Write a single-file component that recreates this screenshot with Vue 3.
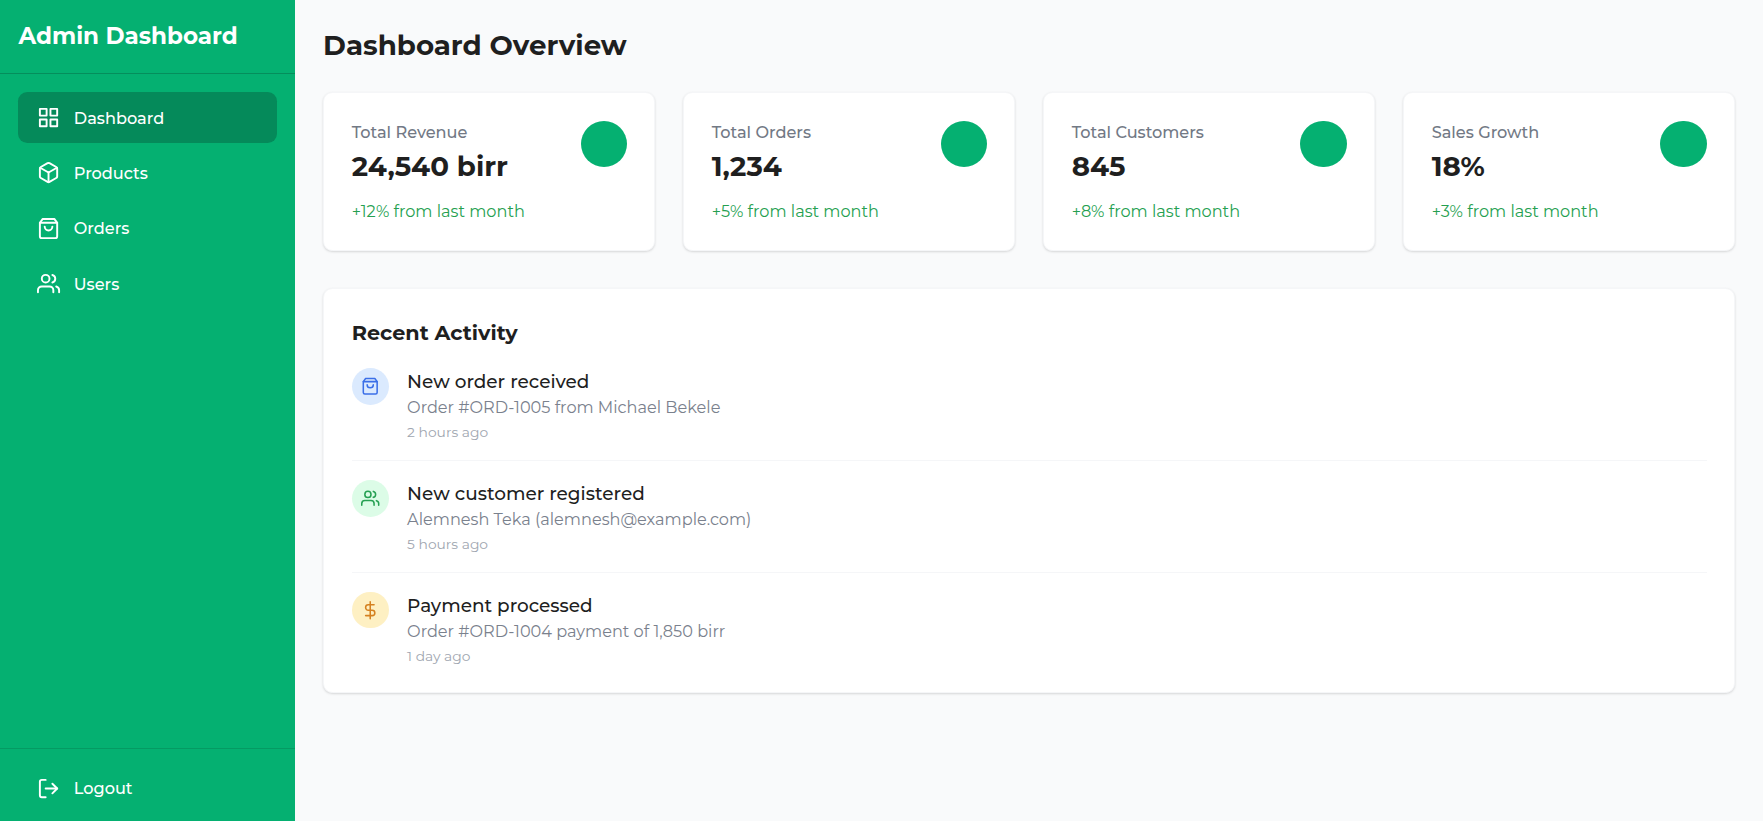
<script setup>
import { h } from 'vue'

const glyphs = {
  grid: ['M3 3h7v7H3z', 'M14 3h7v7h-7z', 'M14 14h7v7h-7z', 'M3 14h7v7H3z'],
  box: [
    'M21 8a2 2 0 0 0-1-1.73l-7-4a2 2 0 0 0-2 0l-7 4A2 2 0 0 0 3 8v8a2 2 0 0 0 1 1.73l7 4a2 2 0 0 0 2 0l7-4A2 2 0 0 0 21 16Z',
    'm3.3 7 8.7 5 8.7-5',
    'M12 22V12',
  ],
  bag: [
    'M6 2 3 6v14a2 2 0 0 0 2 2h14a2 2 0 0 0 2-2V6l-3-4Z',
    'M3 6h18',
    'M16 10a4 4 0 0 1-8 0',
  ],
  users: [
    'M17 21v-2a4 4 0 0 0-4-4H5a4 4 0 0 0-4 4v2',
    'M9 3a4 4 0 1 0 0 8a4 4 0 1 0 0-8',
    'M23 21v-2a4 4 0 0 0-3-3.87',
    'M16 3.13a4 4 0 0 1 0 7.75',
  ],
  dollar: ['M12 1v22', 'M17 5H9.5a3.5 3.5 0 0 0 0 7h5a3.5 3.5 0 0 1 0 7H6'],
  logout: ['M9 21H5a2 2 0 0 1-2-2V5a2 2 0 0 1 2-2h4', 'm16 17 5-5-5-5', 'M21 12H9'],
}

const Icon = (props) =>
  h(
    'svg',
    {
      viewBox: '0 0 24 24',
      fill: 'none',
      stroke: 'currentColor',
      'stroke-width': 2,
      'stroke-linecap': 'round',
      'stroke-linejoin': 'round',
    },
    glyphs[props.name].map((d) => h('path', { d })),
  )
Icon.props = ['name']

const nav = [
  { label: 'Dashboard', icon: 'grid', active: true },
  { label: 'Products', icon: 'box' },
  { label: 'Orders', icon: 'bag' },
  { label: 'Users', icon: 'users' },
]

const stats = [
  { label: 'Total Revenue', value: '24,540 birr', delta: '+12% from last month' },
  { label: 'Total Orders', value: '1,234', delta: '+5% from last month' },
  { label: 'Total Customers', value: '845', delta: '+8% from last month' },
  { label: 'Sales Growth', value: '18%', delta: '+3% from last month' },
]

const activity = [
  { tone: 'blue', icon: 'bag', title: 'New order received', text: 'Order #ORD-1005 from Michael Bekele', time: '2 hours ago' },
  { tone: 'green', icon: 'users', title: 'New customer registered', text: 'Alemnesh Teka (alemnesh@example.com)', time: '5 hours ago' },
  { tone: 'amber', icon: 'dollar', title: 'Payment processed', text: 'Order #ORD-1004 payment of 1,850 birr', time: '1 day ago' },
]
</script>

<template>
  <div class="layout">
    <aside class="sidebar">
      <div class="brand">Admin Dashboard</div>
      <nav class="nav">
        <a v-for="n in nav" :key="n.label" class="link" :class="{ active: n.active }">
          <Icon class="icon" :name="n.icon" /><span>{{ n.label }}</span>
        </a>
      </nav>
      <div class="foot">
        <a class="link"><Icon class="icon" name="logout" /><span>Logout</span></a>
      </div>
    </aside>

    <main class="main">
      <h1 class="heading">Dashboard Overview</h1>
      <section class="stats">
        <article v-for="s in stats" :key="s.label" class="card stat">
          <div>
            <p class="label">{{ s.label }}</p>
            <p class="value">{{ s.value }}</p>
            <p class="delta">{{ s.delta }}</p>
          </div>
          <span class="dot"></span>
        </article>
      </section>
      <section class="card recent">
        <h2 class="subheading">Recent Activity</h2>
        <ul class="list">
          <li v-for="a in activity" :key="a.title" class="entry">
            <span class="badge" :class="a.tone"><Icon class="small-icon" :name="a.icon" /></span>
            <div>
              <p class="title">{{ a.title }}</p>
              <p class="text">{{ a.text }}</p>
              <p class="time">{{ a.time }}</p>
            </div>
          </li>
        </ul>
      </section>
    </main>
  </div>
</template>

<style>
html {
  font-size: 18.46px;
}
body {
  margin: 0;
}
</style>

<style scoped>
.layout {
  display: flex;
  height: 100vh;
  overflow: hidden;
  background: #f9fafb;
  color: #1f1f1f;
  font-family: Montserrat, Inter, "Liberation Sans", sans-serif;
}
p, h1, h2, ul {
  margin: 0;
  padding: 0;
}
.sidebar {
  display: flex;
  flex-direction: column;
  flex: none;
  width: 16rem;
  background: #05b071;
  color: #fff;
}
.brand {
  box-sizing: border-box;
  height: 4rem;
  padding: 1rem;
  border-bottom: 1px solid #058e5c;
  font-size: 1.25rem;
  font-weight: 700;
  line-height: 37px;
  white-space: nowrap;
}
.nav {
  flex: 1;
  display: flex;
  flex-direction: column;
  gap: 0.25rem;
  padding: 1rem;
}
.link {
  display: flex;
  align-items: center;
  gap: 0.75rem;
  height: 2.75rem;
  padding: 0 1rem;
  border-radius: 0.5rem;
  font-size: 0.875rem;
  font-weight: 500;
}
.active {
  background: #058a5a;
}
.icon {
  width: 1.25rem;
  height: 1.25rem;
  overflow: visible;
}
.foot {
  box-sizing: border-box;
  height: 73px;
  padding: 14px 1rem 0;
  border-top: 1px solid #059a63;
}
.main {
  flex: 1;
  min-width: 0;
  padding: 1.5rem;
}
.heading {
  height: 64.6px;
  font-size: 1.5rem;
  font-weight: 700;
  line-height: 35px;
}
.stats {
  display: grid;
  grid-template-columns: repeat(4, 1fr);
  gap: 1.5rem;
}
.card {
  box-sizing: border-box;
  background: #fff;
  border: 1px solid #f5f6f8;
  border-radius: 0.5rem;
  box-shadow: 0 1px 3px rgba(0, 0, 0, 0.09), 0 1px 2px rgba(0, 0, 0, 0.06);
}
.stat {
  display: flex;
  justify-content: space-between;
  height: 159px;
  padding: 1.5rem;
}
.label {
  color: #727985;
  font-size: 0.875rem;
  font-weight: 500;
  line-height: 23px;
}
.value {
  margin-top: 4px;
  font-size: 1.5rem;
  font-weight: 700;
  line-height: 37px;
  white-space: nowrap;
}
.delta {
  margin-top: 15px;
  color: #259f50;
  font-size: 0.875rem;
  line-height: 23px;
}
.dot {
  flex: none;
  width: 2.5rem;
  height: 2.5rem;
  border-radius: 50%;
  background: #05b071;
}
.recent {
  height: 404.7px;
  margin-top: 36.9px;
  padding: 27.8px 1.5rem;
}
.subheading {
  font-size: 1.125rem;
  font-weight: 700;
  line-height: 32px;
}
.list {
  margin-top: 19px;
  list-style: none;
}
.entry {
  box-sizing: border-box;
  display: flex;
  gap: 1rem;
  height: 111.8px;
}
.entry:not(:last-child) {
  background: linear-gradient(#f5f6f8, #f5f6f8) 0 92px / 100% 1px no-repeat;
}
.badge {
  flex: none;
  display: flex;
  align-items: center;
  justify-content: center;
  width: 2rem;
  height: 2rem;
  border-radius: 50%;
}
.small-icon {
  width: 1rem;
  height: 1rem;
  overflow: visible;
}
.blue {
  background: #dbeafe;
  color: #3b6fe8;
}
.green {
  background: #dcfce7;
  color: #25a052;
}
.amber {
  background: #fef0c3;
  color: #d58120;
}
.title {
  font-size: 1rem;
  font-weight: 500;
  line-height: 27px;
}
.text {
  margin-top: 1px;
  color: #7a818d;
  font-size: 0.875rem;
  line-height: 23px;
}
.time {
  margin-top: 3px;
  color: #a0a6b0;
  font-size: 0.75rem;
  line-height: 20px;
}
</style>
